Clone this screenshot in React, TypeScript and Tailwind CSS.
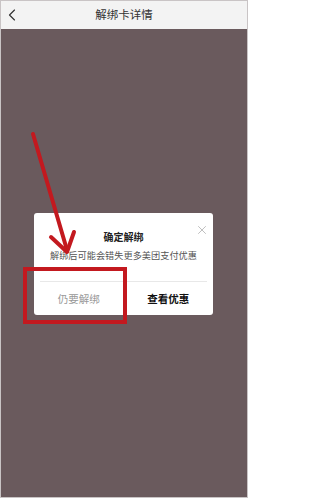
import { ChevronLeft, X } from 'lucide-react';

const font = { fontFamily: '"Noto Sans CJK SC", "Noto Sans", sans-serif' };

export default function App() {
  return (
    <div
      className="relative w-[248px] h-[498px] flex flex-col border border-[#c9c4c5] bg-[#6a5a5d] overflow-hidden"
      style={font}
    >
      {/* header */}
      <div className="h-[28px] shrink-0 bg-[#f3f3f3] flex items-center relative">
        <ChevronLeft className="w-[20px] h-[20px] ml-[1px] text-[#333]" strokeWidth={1.4} />
        <div className="absolute inset-x-0 text-center text-[11.5px] text-[#333] leading-none pointer-events-none">
          解绑卡详情
        </div>
      </div>

      {/* dimmed body */}
      <div className="flex-1 pt-[184px]">
        <div className="ml-[33px] w-[179px] h-[102px] bg-white rounded-[3px] flex flex-col">
          <div className="h-[68px] relative flex flex-col items-center">
            <X className="absolute right-[4px] top-[10px] w-[14px] h-[14px] text-[#aaa]" strokeWidth={1.3} />
            <div className="mt-[19px] text-[10px] font-bold text-[#222] leading-none">确定解绑</div>
            <div className="mt-[9px] text-[9.2px] text-[#555] leading-none whitespace-nowrap">
              解绑后可能会错失更多美团支付优惠
            </div>
          </div>
          <div className="h-px bg-[#e8e8e8] mx-[6px]" />
          <div className="flex-1 flex">
            <div className="flex-1 flex items-center justify-center text-[10.5px] text-[#999]">仍要解绑</div>
            <div className="flex-1 flex items-center justify-center text-[10.5px] font-bold text-[#111]">查看优惠</div>
          </div>
        </div>
      </div>

      {/* annotation: red box */}
      <div className="absolute left-[22px] top-[266px] w-[104px] h-[57px] border-[4px] border-[#c3191f]" />

      {/* annotation: arrow */}
      <svg className="absolute left-0 top-0 pointer-events-none" width="248" height="498" viewBox="0 0 248 498">
        <line x1="32" y1="133" x2="66" y2="249" stroke="#c3191f" strokeWidth="4" strokeLinecap="round" />
        <polyline
          points="50,236 66,251 73,231"
          fill="none"
          stroke="#c3191f"
          strokeWidth="4"
          strokeLinecap="round"
          strokeLinejoin="round"
        />
      </svg>
    </div>
  );
}
